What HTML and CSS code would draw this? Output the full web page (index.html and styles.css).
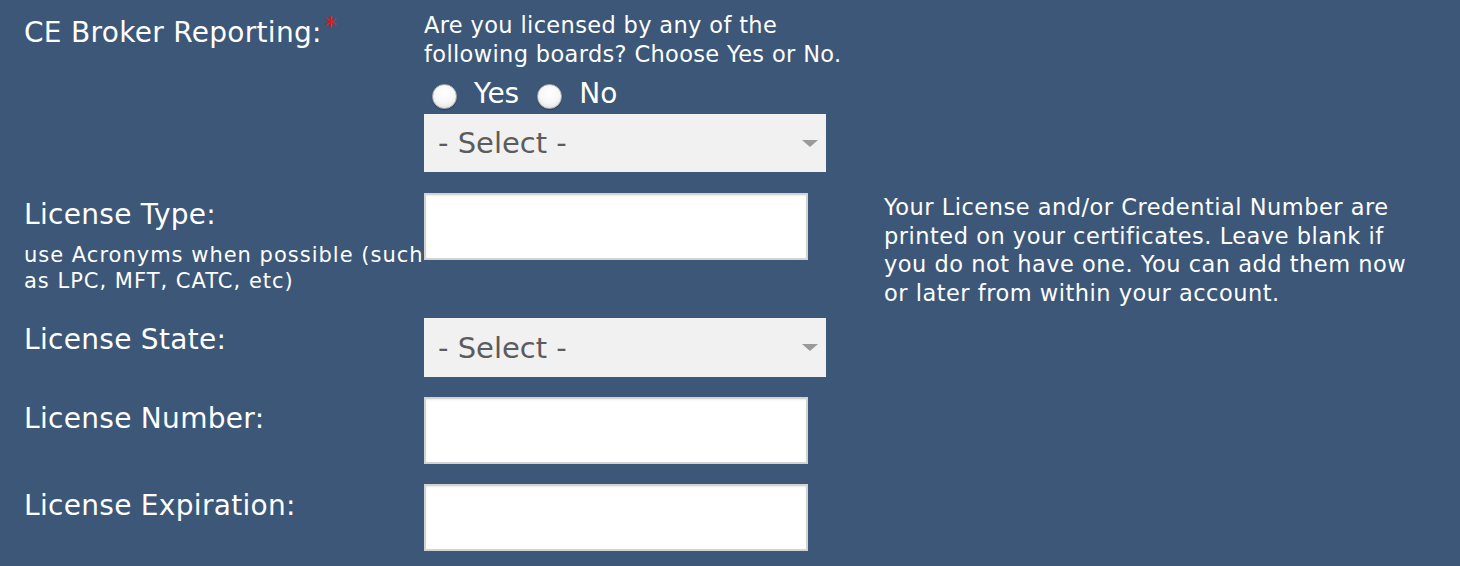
FILE: index.html
```html
<!DOCTYPE html>
<html lang="en">
<head>
<meta charset="utf-8">
<title>CE Broker Reporting</title>
<link rel="stylesheet" href="styles.css">
</head>
<body>
<form class="form">
  <div class="label">CE Broker Reporting:<span class="req">*</span></div>
  <div class="field field-first">
    <p class="question">Are you licensed by any of the<br>following boards? Choose Yes or No.</p>
    <div class="radios">
      <label class="radio"><input type="radio" name="ceb" value="yes">Yes</label>
      <label class="radio"><input type="radio" name="ceb" value="no">No</label>
    </div>
    <div class="select-wrap">
      <select class="select"><option>- Select -</option></select>
    </div>
  </div>

  <div class="label">License Type:<span class="hint">use Acronyms when possible (such<br>as LPC, MFT, CATC, etc)</span></div>
  <div class="field"><input class="text" type="text"></div>
  <p class="help">Your License and/or Credential Number are<br>printed on your certificates. Leave blank if<br>you do not have one. You can add them now<br>or later from within your account.</p>

  <div class="label">License State:</div>
  <div class="field">
    <div class="select-wrap select-tall">
      <select class="select"><option>- Select -</option></select>
    </div>
  </div>

  <div class="label">License Number:</div>
  <div class="field"><input class="text" type="text"></div>

  <div class="label">License Expiration:</div>
  <div class="field"><input class="text" type="text"></div>
</form>
</body>
</html>
```
FILE: styles.css
```css
html, body {
  margin: 0;
  padding: 0;
  background: #3c5778;
}
body {
  font-family: "DejaVu Sans", "Liberation Sans", sans-serif;
  color: #ffffff;
}
.form {
  display: grid;
  grid-template-columns: 400px 460px 1fr;
  row-gap: 20px;
  padding: 11px 0 0 24px;
}
.label {
  grid-column: 1;
  font-size: 28px;
  line-height: 40px;
  letter-spacing: 0.3px;
  padding-top: 2px;
  white-space: nowrap;
}
.req {
  display: inline-block;
  vertical-align: top;
  margin: 3px 0 0 3px;
  color: #e8161b;
  font-size: 24px;
  line-height: 20px;
}
.hint {
  display: block;
  margin-top: 7px;
  padding-bottom: 4px;
  font-size: 21px;
  line-height: 26px;
  letter-spacing: 1px;
}
.field {
  grid-column: 2;
  display: flex;
  flex-direction: column;
  align-items: flex-start;
}
.field-first {
  padding-bottom: 1px;
}
.question {
  margin: 0;
  font-size: 22.5px;
  line-height: 29px;
  letter-spacing: 0.35px;
}
.radios {
  display: flex;
  align-items: center;
  margin: 10px 0 5px 8px;
  font-size: 28px;
  line-height: 30px;
}
.radio {
  display: flex;
  align-items: center;
}
.radio input {
  appearance: none;
  -webkit-appearance: none;
  box-sizing: border-box;
  width: 25px;
  height: 25px;
  margin: 5px 17px 0 0;
  border-radius: 50%;
  border: 1px solid #b0b0b0;
  background: radial-gradient(circle at 50% 35%, #ffffff 0%, #f6f6f6 55%, #d6d6d6 100%);
  box-shadow: 0 1px 1px rgba(0,0,0,0.25);
}
.radio + .radio {
  margin-left: 18px;
}
.select-wrap {
  position: relative;
  width: 402px;
  height: 58px;
}
.select-tall {
  height: 59px;
}
.select-wrap::after {
  content: "";
  position: absolute;
  right: 8px;
  top: 26px;
  border-left: 8px solid transparent;
  border-right: 8px solid transparent;
  border-top: 7px solid #9a9a9a;
  pointer-events: none;
}
.select {
  appearance: none;
  -webkit-appearance: none;
  width: 100%;
  height: 100%;
  border: 0;
  border-radius: 0;
  background: #f1f1f1;
  color: #5c5c5c;
  font-family: inherit;
  font-size: 29px;
  padding: 0 0 0 14px;
  margin: 0;
}
.text {
  box-sizing: border-box;
  width: 384px;
  height: 67px;
  margin: 0;
  border: 2px solid #d3d3d3;
  background: #ffffff;
  box-shadow: inset 0 1px 2px rgba(0,0,0,0.08);
  font-family: inherit;
  font-size: 22px;
}
.help {
  grid-column: 3;
  grid-row: 2 / span 4;
  align-self: start;
  margin: 0;
  font-size: 22.5px;
  line-height: 28.5px;
  letter-spacing: 0.5px;
}
```
